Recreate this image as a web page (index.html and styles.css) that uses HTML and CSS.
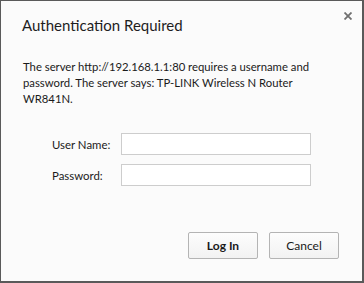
FILE: index.html
```html
<!DOCTYPE html>
<html lang="en">
<head>
    <meta charset="UTF-8">
    <title>Authentication Required</title>
    <link rel="stylesheet" href="styles.css">
</head>
<body>
    <div class="dialog">
        <!-- title bar -->
        <div class="dialog-head">
            <h1>Authentication Required</h1>
            <span class="close-btn">
                <svg width="8" height="8" viewBox="0 0 8 8">
                    <path d="M0.5 0.5 L7.5 7.5 M7.5 0.5 L0.5 7.5" stroke="#707070" stroke-width="1.8"/>
                </svg>
            </span>
        </div>

        <p class="message">The server http://192.168.1.1:80 requires a username and password. The server says: TP-LINK Wireless N Router WR841N.</p>

        <!-- login fields -->
        <div class="fields">
            <label for="userName">User Name:</label>
            <input type="text" id="userName">
            <label for="password">Password:</label>
            <input type="password" id="password">
        </div>

        <div class="buttons">
            <button class="login-btn">Log In</button>
            <button>Cancel</button>
        </div>
    </div>
</body>
</html>
```
FILE: styles.css
```css
html, body {
    margin: 0;
    padding: 0;
    font-family: Lato, "Open Sans", sans-serif;
    background-color: #fbfbfb;
}

.dialog {
    box-sizing: border-box;
    width: 364px;
    height: 283px;
    background-color: #fbfbfb;
    border: 1px solid #5a5a5a;
    border-right-width: 2px;
    border-bottom-width: 2px;
    display: flex;
    flex-direction: column;
}

.dialog-head {
    display: flex;
    justify-content: space-between;
    align-items: flex-start;
    padding: 12px 10px 0 21px;
}

h1 {
    margin: 0;
    font-size: 15px;
    font-weight: normal;
    color: #1e1e1e;
    line-height: 24px;
}

.close-btn {
    display: flex;
    margin-top: -1px;
}

.message {
    margin: 22px 20px 0 22px;
    font-size: 11.3px;
    line-height: 16px;
    color: #1a1a1a;
}

.fields {
    display: grid;
    grid-template-columns: 69px 190px;
    row-gap: 9px;
    align-items: center;
    margin: 26px 0 0 51px;
}

label {
    font-size: 11.4px;
    color: #1a1a1a;
}

input {
    box-sizing: border-box;
    height: 22px;
    width: 190px;
    border: 1px solid #cdcdcd;
    background-color: #fff;
    margin: 0;
}

.buttons {
    display: flex;
    justify-content: flex-end;
    gap: 11px;
    margin-top: auto;
    padding: 0 23px 22px 0;
}

.buttons button {
    width: 70px;
    height: 27px;
    font-family: inherit;
    font-size: 12px;
    color: #1a1a1a;
    background: linear-gradient(#fdfdfd, #f2f2f2);
    border: 1px solid #b4b4b4;
    border-radius: 2px;
}

.buttons .login-btn {
    font-weight: bold;
}
```
